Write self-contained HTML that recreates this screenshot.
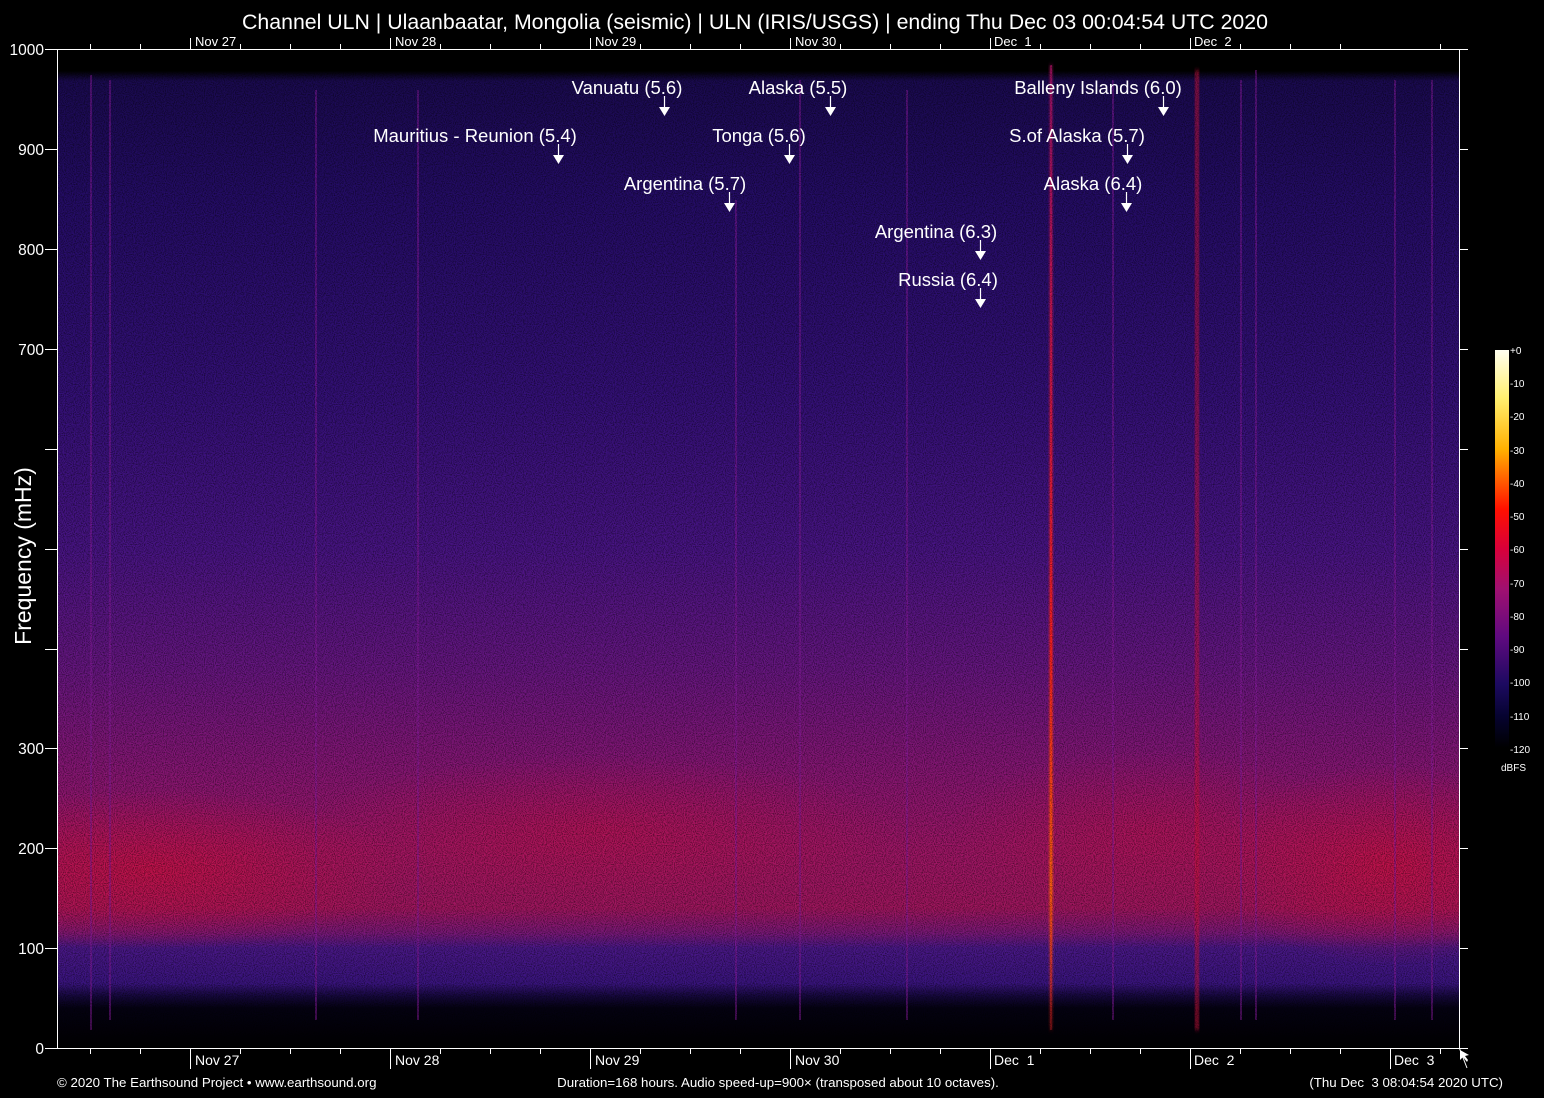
<!DOCTYPE html>
<html><head><meta charset="utf-8"><style>
html,body{margin:0;padding:0;background:#000;}
svg{display:block}
text{font-family:"Liberation Sans",Arial,sans-serif;fill:#fff}
</style></head><body>
<svg width="1544" height="1098" viewBox="0 0 1544 1098" xmlns="http://www.w3.org/2000/svg">
<defs>
<clipPath id="pc"><rect x="57" y="49" width="1402" height="999"/></clipPath>
<linearGradient id="bg" x1="0" y1="49" x2="0" y2="1048" gradientUnits="userSpaceOnUse">
<stop offset="0" stop-color="#000"/>
<stop offset="0.022" stop-color="#000"/>
<stop offset="0.032" stop-color="#1a0a50"/>
<stop offset="0.15" stop-color="#240c66"/>
<stop offset="0.35" stop-color="#341078"/>
<stop offset="0.5" stop-color="#481484"/>
<stop offset="0.62" stop-color="#661680"/>
<stop offset="0.72" stop-color="#861674"/>
<stop offset="0.8" stop-color="#9e1666"/>
<stop offset="0.86" stop-color="#a0165e"/>
<stop offset="0.885" stop-color="#7a1878"/>
<stop offset="0.9" stop-color="#4a1888"/>
<stop offset="0.935" stop-color="#3a1480"/>
<stop offset="0.948" stop-color="#16083e"/>
<stop offset="0.96" stop-color="#040112"/>
<stop offset="1" stop-color="#000"/>
</linearGradient>
<radialGradient id="rl" cx="0.5" cy="0.5" r="0.5">
<stop offset="0" stop-color="#d01040" stop-opacity="0.7"/>
<stop offset="1" stop-color="#d01040" stop-opacity="0"/>
</radialGradient>
<linearGradient id="cb" x1="0" y1="0" x2="0" y2="1">
<stop offset="0" stop-color="#fffff0"/>
<stop offset="0.12" stop-color="#fff070"/>
<stop offset="0.25" stop-color="#ffb000"/>
<stop offset="0.4" stop-color="#ff1000"/>
<stop offset="0.5" stop-color="#d8003a"/>
<stop offset="0.6" stop-color="#a01070"/>
<stop offset="0.72" stop-color="#600a80"/>
<stop offset="0.84" stop-color="#1c0a60"/>
<stop offset="0.92" stop-color="#060330"/>
<stop offset="1" stop-color="#000"/>
</linearGradient>
<linearGradient id="eq" x1="0" y1="0" x2="0" y2="1">
<stop offset="0" stop-color="#c01070" stop-opacity="0.6"/>
<stop offset="0.6" stop-color="#ff2020"/>
<stop offset="0.85" stop-color="#ff6010"/>
<stop offset="1" stop-color="#ff2020" stop-opacity="0.3"/>
</linearGradient>
<filter id="noise" x="0" y="0" width="100%" height="100%">
<feTurbulence type="fractalNoise" baseFrequency="0.9" numOctaves="1" seed="3"/>
<feColorMatrix type="matrix" values="0 0 0 0 0  0 0 0 0 0  0 0 0 0 0  1.3 0 0 0 -0.5"/>
</filter>
<filter id="blur"><feGaussianBlur stdDeviation="2"/></filter>
</defs>

<rect x="57" y="49" width="1402" height="999" fill="url(#bg)"/>
<g clip-path="url(#pc)">
<ellipse cx="150" cy="870" rx="260" ry="80" fill="url(#rl)"/>
<ellipse cx="600" cy="830" rx="300" ry="75" fill="url(#rl)" opacity="0.6"/>
<ellipse cx="1390" cy="865" rx="180" ry="100" fill="url(#rl)"/>
<ellipse cx="1150" cy="830" rx="200" ry="80" fill="url(#rl)" opacity="0.5"/>
</g>
<g stroke="#8a1aa0" stroke-width="2" opacity="0.5">
<path d="M91 75V1030M110 80V1020M316 90V1020M418 90V1020M736 200V1020M800 80V1020M907 90V1020M1113 80V1020M1241 80V1020M1256 70V1020M1395 80V1020M1432 80V1020"/>
</g>
<rect x="1049" y="65" width="4" height="965" fill="url(#eq)" filter="url(#blur)"/>
<rect x="1050" y="65" width="2" height="965" fill="url(#eq)"/>
<rect x="1195" y="70" width="4" height="960" fill="#d0103c" opacity="0.85" filter="url(#blur)"/>
<rect x="57" y="49" width="1402" height="999" filter="url(#noise)"/>

<g stroke="#fff" stroke-width="1" fill="none">
<path d="M57.5 49V1048.5M1459.5 49V1048.5M45 49.5H1468M45 1048.5H1468"/>
<path d="M45 149.5H57M45 249.5H57M45 349.5H57M45 449.5H57M45 549.5H57M45 649.5H57M45 748.5H57M45 848.5H57M45 948.5H57"/>
<path d="M1459 149.5H1468M1459 249.5H1468M1459 349.5H1468M1459 449.5H1468M1459 549.5H1468M1459 649.5H1468M1459 748.5H1468M1459 848.5H1468M1459 948.5H1468"/>
<path d="M90.5 49V44M140.5 49V44M240.5 49V44M290.5 49V44M340.5 49V44M440.5 49V44M490.5 49V44M540.5 49V44M640.5 49V44M690.5 49V44M740.5 49V44M840.5 49V44M890.5 49V44M940.5 49V44M1040.5 49V44M1090.5 49V44M1140.5 49V44M1240.5 49V44M1290.5 49V44M1340.5 49V44M1440.5 49V44"/>
<path d="M190.5 49V38M390.5 49V38M590.5 49V38M790.5 49V38M990.5 49V38M1190.5 49V38"/>
<path d="M90.5 1048V1054M140.5 1048V1054M240.5 1048V1054M290.5 1048V1054M340.5 1048V1054M440.5 1048V1054M490.5 1048V1054M540.5 1048V1054M640.5 1048V1054M690.5 1048V1054M740.5 1048V1054M840.5 1048V1054M890.5 1048V1054M940.5 1048V1054M1040.5 1048V1054M1090.5 1048V1054M1140.5 1048V1054M1240.5 1048V1054M1290.5 1048V1054M1340.5 1048V1054M1440.5 1048V1054"/>
<path d="M190.5 1048V1069M390.5 1048V1069M590.5 1048V1069M790.5 1048V1069M990.5 1048V1069M1190.5 1048V1069M1390.5 1048V1069"/>
<path d="M1459.5 1048.5L1467 1068"/>
</g>
<path d="M1460 1050L1460 1060L1463 1057L1467 1062L1468 1060L1465 1056L1469 1055Z" fill="#fff"/>

<text x="755" y="29" font-size="21.3" text-anchor="middle">Channel ULN | Ulaanbaatar, Mongolia (seismic) | ULN (IRIS/USGS) | ending Thu Dec 03 00:04:54 UTC 2020</text>

<g font-size="15.5" text-anchor="end">
<text x="44" y="55">1000</text><text x="44" y="155">900</text><text x="44" y="255">800</text><text x="44" y="355">700</text>
<text x="44" y="754">300</text><text x="44" y="854">200</text><text x="44" y="954">100</text><text x="44" y="1054">0</text>
</g>
<text transform="translate(31 556) rotate(-90)" font-size="23" text-anchor="middle">Frequency (mHz)</text>

<g font-size="13">
<text x="195" y="46">Nov 27</text><text x="395" y="46">Nov 28</text><text x="595" y="46">Nov 29</text><text x="795" y="46">Nov 30</text><text x="994" y="46" xml:space="preserve">Dec  1</text><text x="1194" y="46" xml:space="preserve">Dec  2</text>
</g>
<g font-size="14">
<text x="195" y="1065">Nov 27</text><text x="395" y="1065">Nov 28</text><text x="595" y="1065">Nov 29</text><text x="795" y="1065">Nov 30</text><text x="994" y="1065" xml:space="preserve">Dec  1</text><text x="1194" y="1065" xml:space="preserve">Dec  2</text><text x="1394" y="1065" xml:space="preserve">Dec  3</text>
</g>

<g font-size="18.5" text-anchor="middle">
<text x="627" y="94">Vanuatu (5.6)</text>
<text x="798" y="94">Alaska (5.5)</text>
<text x="475" y="142">Mauritius - Reunion (5.4)</text>
<text x="759" y="142">Tonga (5.6)</text>
<text x="685" y="190">Argentina (5.7)</text>
<text x="936" y="238">Argentina (6.3)</text>
<text x="948" y="286">Russia (6.4)</text>
<text x="1098" y="94">Balleny Islands (6.0)</text>
<text x="1077" y="142">S.of Alaska (5.7)</text>
<text x="1093" y="190">Alaska (6.4)</text>
</g>
<g stroke="#fff" stroke-width="1.2">
<path d="M664.5 96V108M830.5 96V108M1163.5 96V108M558.5 144V156M789.5 144V156M1127.5 144V156M729.5 192V204M1126.5 192V204M980.5 240V252M980.5 288V300"/>
</g>
<g fill="#fff">
<path d="M659 107h11l-5.5 9z"/><path d="M825 107h11l-5.5 9z"/><path d="M1158 107h11l-5.5 9z"/>
<path d="M553 155h11l-5.5 9z"/><path d="M784 155h11l-5.5 9z"/><path d="M1122 155h11l-5.5 9z"/>
<path d="M724 203h11l-5.5 9z"/><path d="M1121 203h11l-5.5 9z"/>
<path d="M975 251h11l-5.5 9z"/><path d="M975 299h11l-5.5 9z"/>
</g>

<rect x="1495" y="350" width="14" height="398" fill="url(#cb)"/>
<g font-size="10" fill="#ddd">
<text x="1510" y="354">+0</text><text x="1510" y="387">-10</text><text x="1510" y="420">-20</text><text x="1510" y="454">-30</text><text x="1510" y="487">-40</text><text x="1510" y="520">-50</text><text x="1510" y="553">-60</text><text x="1510" y="587">-70</text><text x="1510" y="620">-80</text><text x="1510" y="653">-90</text><text x="1510" y="686">-100</text><text x="1510" y="720">-110</text><text x="1510" y="753">-120</text>
<text x="1501" y="771">dBFS</text>
</g>

<g font-size="13.3">
<text x="57" y="1087">© 2020 The Earthsound Project • www.earthsound.org</text>
<text x="778" y="1087" text-anchor="middle">Duration=168 hours. Audio speed-up=900× (transposed about 10 octaves).</text>
<text x="1503" y="1087" text-anchor="end" xml:space="preserve">(Thu Dec  3 08:04:54 2020 UTC)</text>
</g>
</svg>
</body></html>
